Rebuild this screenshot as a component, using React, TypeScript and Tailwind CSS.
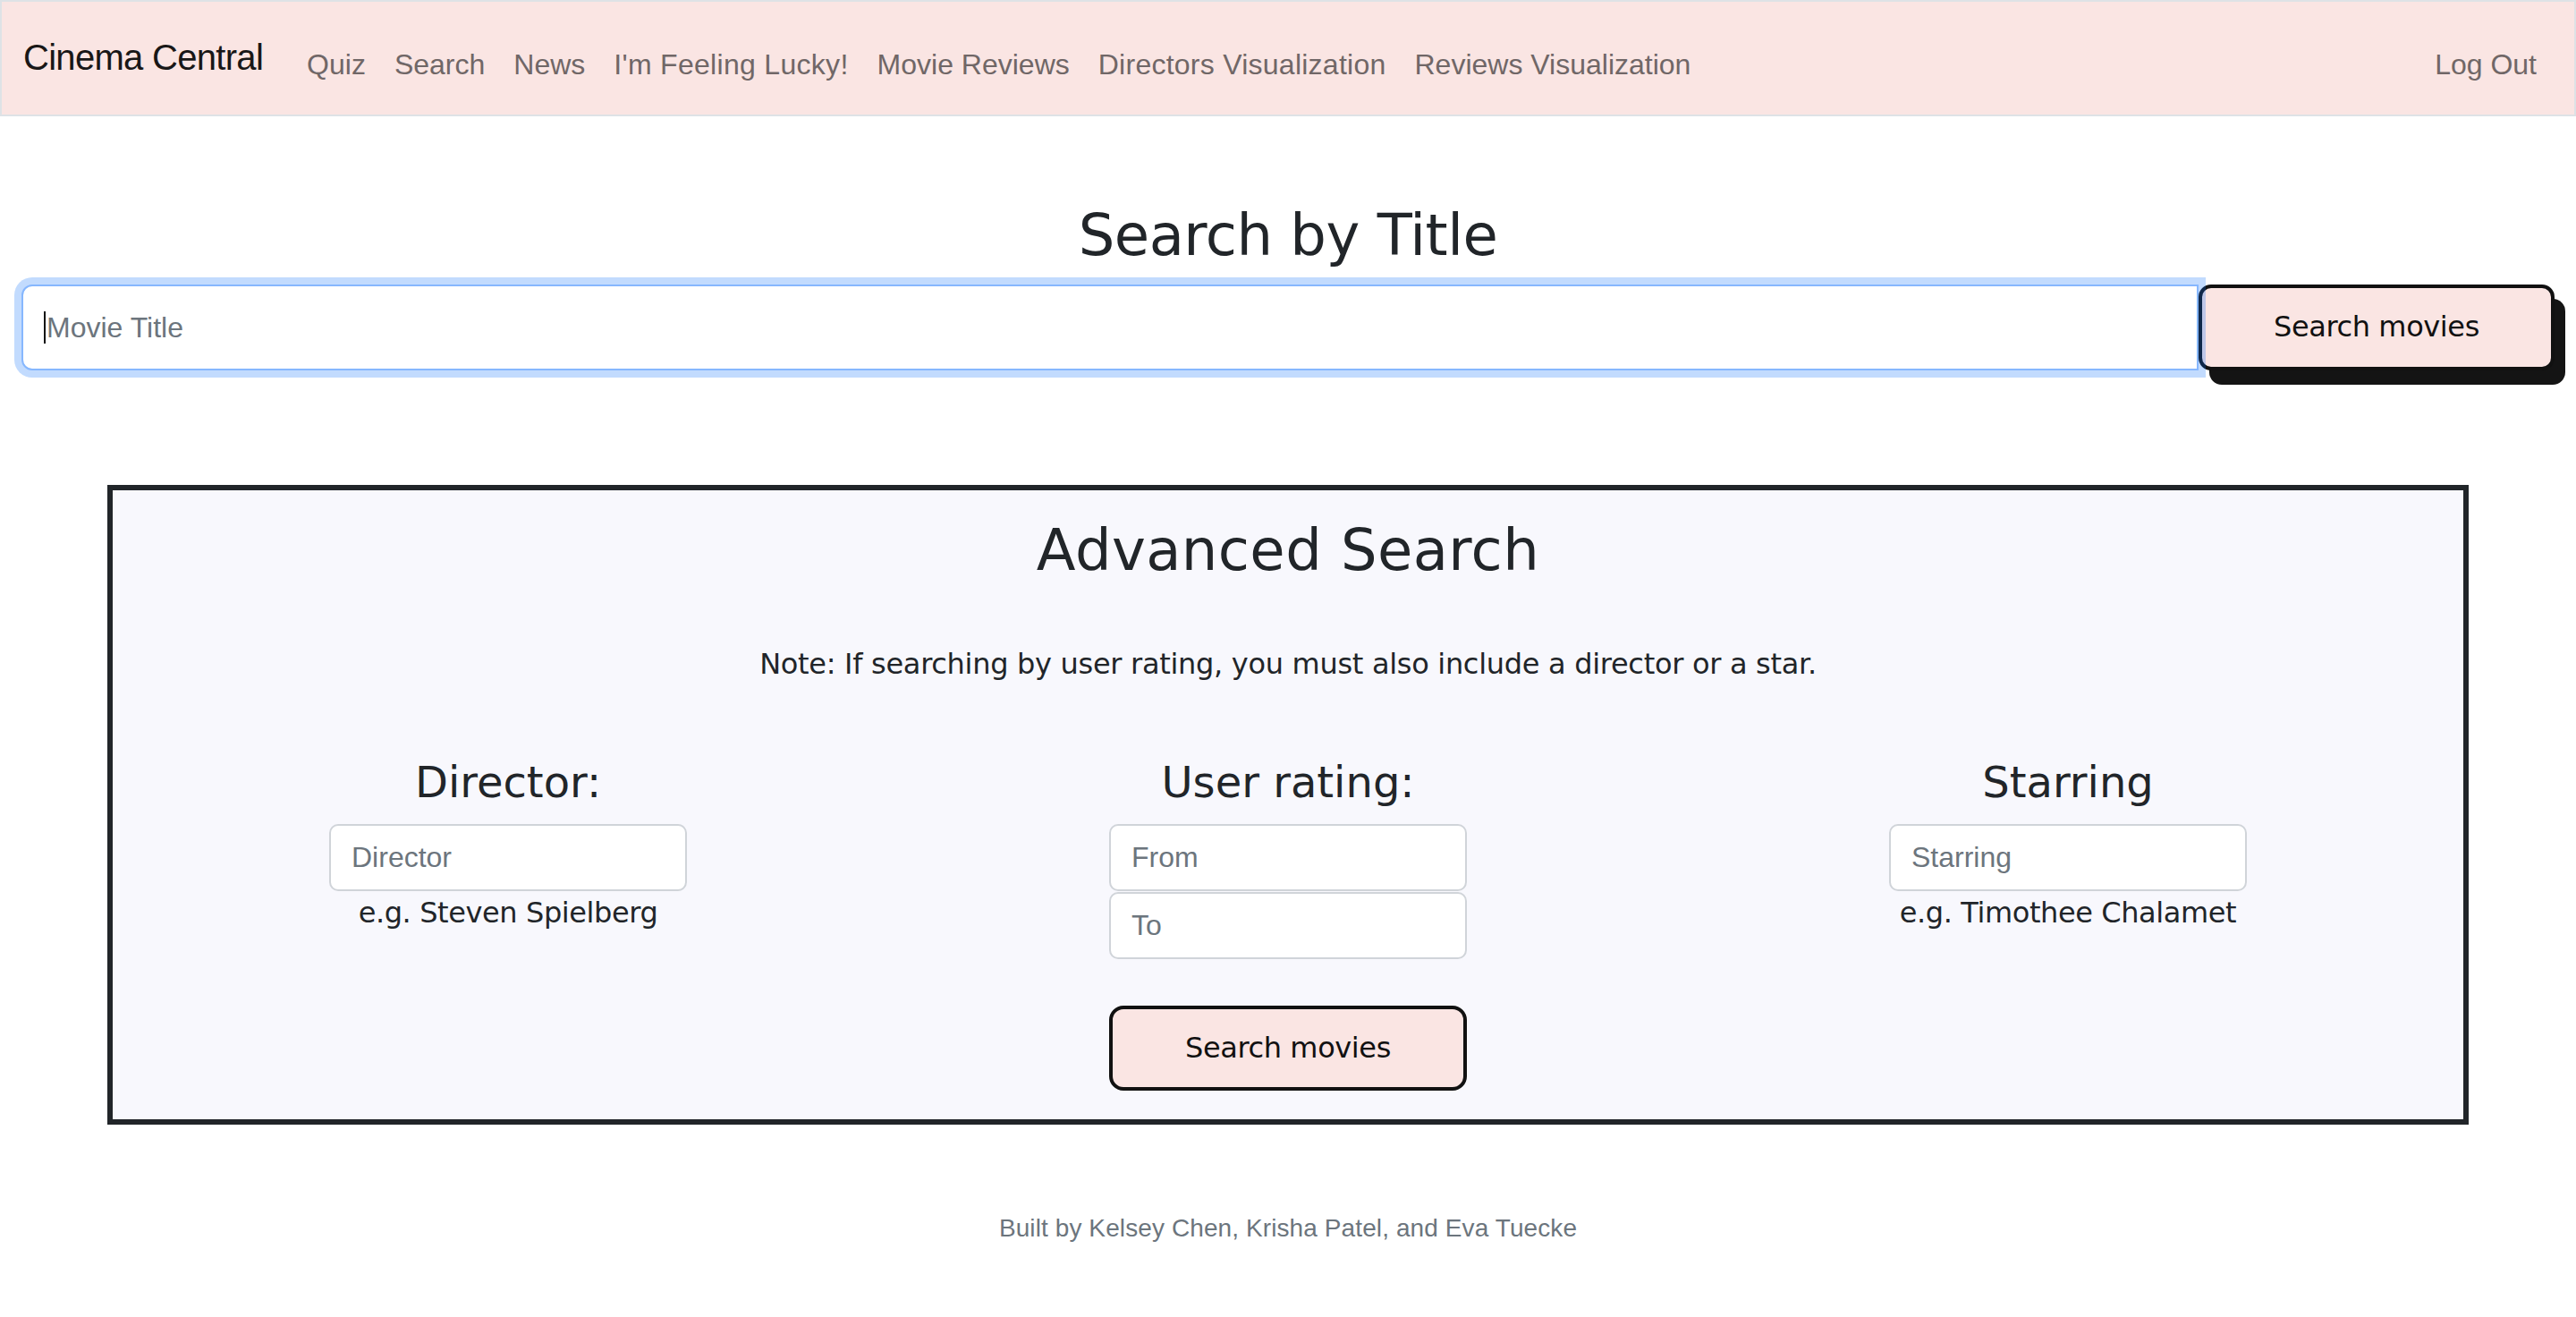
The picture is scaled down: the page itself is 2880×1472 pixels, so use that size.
const navLinks = [
  { label: 'Quiz', track: '' },
  { label: 'Search', track: '' },
  { label: 'News', track: '' },
  { label: "I'm Feeling Lucky!", track: 'tracking-[0.3px]' },
  { label: 'Movie Reviews', track: '' },
  { label: 'Directors Visualization', track: 'tracking-[0.25px]' },
  { label: 'Reviews Visualization', track: '' },
]

const display = { fontFamily: '"DejaVu Sans", "Open Sans", sans-serif' }
const system = { fontFamily: '"Liberation Sans", Arial, sans-serif' }

function Navbar() {
  return (
    <nav
      className="flex h-[130px] items-start border-2 border-[#dee2e6] bg-[#fae5e3] pl-[24px] pr-[24px]"
      style={system}
    >
      {/* Brand */}
      <a className="mt-[32px] mr-[33px] whitespace-nowrap text-[40px] leading-[60px] tracking-[-0.7px] text-[#191717]">
        Cinema Central
      </a>

      {/* Links */}
      <ul className="mt-[46px] flex">
        {navLinks.map((link) => (
          <li key={link.label}>
            <a
              className={`block whitespace-nowrap px-[16px] text-[32px] leading-[48px] text-[#706767] ${link.track}`}
            >
              {link.label}
            </a>
          </li>
        ))}
      </ul>

      <a className="ml-auto mt-[46px] block whitespace-nowrap pl-[16px] pr-[18px] text-[32px] leading-[48px] text-[#706767]">
        Log Out
      </a>
    </nav>
  )
}

function TitleSearch() {
  return (
    <section className="flex flex-col items-center">
      <h2
        className="mt-[95px] text-[64px] leading-[77px] tracking-[-0.5px] text-[#212529]"
        style={display}
      >
        Search by Title
      </h2>

      <div className="mt-[16px] flex h-[96px] w-full">
        <div className="relative z-10 flex-1">
          <input
            placeholder="Movie Title"
            className="h-full w-full rounded-l-[12px] border-2 border-[#86b7fe] bg-white pl-[26px] text-[32px] text-[#212529] shadow-[0_0_0_8px_rgba(13,110,253,0.25)] outline-none placeholder:text-[#6c757d]"
            style={system}
          />
          {/* Caret */}
          <span className="absolute left-[25px] top-[30px] h-[36px] w-[2px] bg-[#111]" />
        </div>
        <button
          className="w-[398px] rounded-[14px] border-4 border-[#111] bg-[#fae5e3] pb-[2px] text-[32px] tracking-[-0.4px] text-[#111] shadow-[12px_16px_0_0_#141414]"
          style={display}
        >
          Search movies
        </button>
      </div>
    </section>
  )
}

function FieldInput({ placeholder }: { placeholder: string }) {
  return (
    <input
      placeholder={placeholder}
      className="h-[75px] w-[400px] rounded-[10px] border-2 border-[#d0d4d9] bg-white pl-[23px] text-[32px] outline-none placeholder:text-[#6c757d]"
      style={system}
    />
  )
}

function AdvancedSearch() {
  return (
    <section
      className="mx-[96px] mt-[128px] flex flex-col items-center border-[6px] border-[#212529] bg-[#f8f8fd] px-[6px] pt-[29px] pb-[32px] text-[#212529]"
      style={display}
    >
      <h1 className="text-[64px] leading-[77px] tracking-[0.4px]">Advanced Search</h1>

      <p className="mt-[64px] text-[32px] leading-[48px] tracking-[-0.3px]">
        Note: If searching by user rating, you must also include a director or a star.
      </p>

      {/* Three filter columns */}
      <div className="mt-[79px] grid w-full grid-cols-3">
        <div className="flex flex-col items-center">
          <h3 className="text-[48px] leading-[58px]">Director:</h3>
          <div className="mt-[18px]">
            <FieldInput placeholder="Director" />
          </div>
          <span className="text-[32px] leading-[48px] tracking-[-0.4px]">e.g. Steven Spielberg</span>
        </div>

        <div className="flex flex-col items-center">
          <h3 className="text-[48px] leading-[58px]">User rating:</h3>
          <div className="mt-[18px] flex flex-col gap-[1px]">
            <FieldInput placeholder="From" />
            <FieldInput placeholder="To" />
          </div>
        </div>

        <div className="flex flex-col items-center">
          <h3 className="text-[48px] leading-[58px]">Starring</h3>
          <div className="mt-[18px]">
            <FieldInput placeholder="Starring" />
          </div>
          <span className="text-[32px] leading-[48px] tracking-[-0.4px]">e.g. Timothee Chalamet</span>
        </div>
      </div>

      <button className="mt-[52px] h-[95px] w-[400px] rounded-[16px] border-4 border-[#111] bg-[#fae5e3] pb-[2px] text-[32px] tracking-[-0.4px] text-[#111]">
        Search movies
      </button>
    </section>
  )
}

export default function App() {
  return (
    <div className="min-h-screen bg-white">
      <Navbar />
      <main className="px-[24px]">
        <TitleSearch />
        <AdvancedSearch />
        <footer
          className="mt-[95px] text-center text-[28px] leading-[42px] tracking-[0.1px] text-[#6c757d]"
          style={system}
        >
          Built by Kelsey Chen, Krisha Patel, and Eva Tuecke
        </footer>
      </main>
    </div>
  )
}
